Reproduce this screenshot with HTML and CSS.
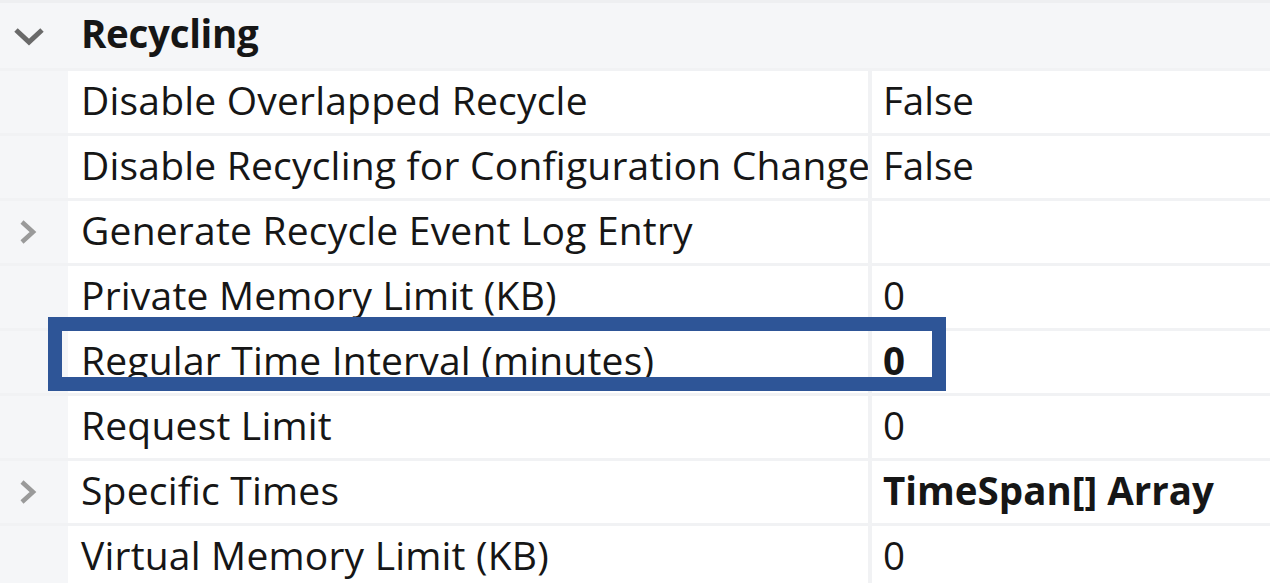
FILE: index.html
```html
<!DOCTYPE html>
<html lang="en">
<head>
  <meta charset="UTF-8">
  <title>Recycling Properties</title>
  <link rel="stylesheet" href="styles.css">
</head>
<body>

  <div class="grid">
    <div class="category">
      <div class="gutter">
        <svg class="chev-down" width="32" height="20" viewBox="0 0 32 20"><path d="M3 4 L16 16 L29 4" fill="none" stroke="#6a6a6a" stroke-width="5"/></svg>
      </div>
      <div class="cat-name">Recycling</div>
    </div>

    <div class="row">
      <div class="gutter"></div>
      <div class="name">Disable Overlapped Recycle</div>
      <div class="value">False</div>
    </div>
    <div class="row">
      <div class="gutter"></div>
      <div class="name">Disable Recycling for Configuration Changes</div>
      <div class="value">False</div>
    </div>
    <div class="row">
      <div class="gutter">
        <svg class="chev-right" width="20" height="26" viewBox="0 0 20 26"><path d="M4 3 L15 13 L4 23" fill="none" stroke="#9a9a9a" stroke-width="4.5"/></svg>
      </div>
      <div class="name">Generate Recycle Event Log Entry</div>
      <div class="value"></div>
    </div>
    <div class="row">
      <div class="gutter"></div>
      <div class="name">Private Memory Limit (KB)</div>
      <div class="value">0</div>
    </div>
    <div class="row">
      <div class="gutter"></div>
      <div class="name">Regular Time Interval (minutes)</div>
      <div class="value bold">0</div>
    </div>
    <div class="row">
      <div class="gutter"></div>
      <div class="name">Request Limit</div>
      <div class="value">0</div>
    </div>
    <div class="row">
      <div class="gutter">
        <svg class="chev-right" width="20" height="26" viewBox="0 0 20 26"><path d="M4 3 L15 13 L4 23" fill="none" stroke="#9a9a9a" stroke-width="4.5"/></svg>
      </div>
      <div class="name">Specific Times</div>
      <div class="value bold">TimeSpan[] Array</div>
    </div>
    <div class="row">
      <div class="gutter"></div>
      <div class="name">Virtual Memory Limit (KB)</div>
      <div class="value">0</div>
    </div>

    <!-- highlight annotation -->
    <div class="highlight"></div>
  </div>

</body>
</html>
```

FILE: styles.css
```css
body {
  margin: 0;
  background: #ffffff;
  font-family: "Open Sans", "Noto Sans", sans-serif;
  color: #161616;
  overflow: hidden;
}

.grid {
  position: relative;
  width: 1270px;
  height: 583px;
  overflow: hidden;
}

.category {
  display: flex;
  height: 68px;
  background: #f5f6f8;
  border-top: 3px solid #eeeff1;
  box-sizing: border-box;
}

.gutter {
  width: 68px;
  flex: none;
  background: #f5f6f8;
  display: flex;
  align-items: center;
  justify-content: center;
}

.category .gutter {
  justify-content: flex-start;
  padding-left: 13px;
  box-sizing: border-box;
}

.cat-name {
  font-weight: bold;
  font-size: 38.5px;
  padding-left: 13px;
  line-height: 60px;
  letter-spacing: -0.3px;
}

.row {
  display: flex;
  height: 65px;
  border-top: 3px solid #f1f2f4;
  box-sizing: border-box;
}

.row .gutter {
  justify-content: flex-start;
  padding-left: 18px;
  box-sizing: border-box;
}

.name {
  width: 804px;
  flex: none;
  font-size: 39px;
  padding-left: 13px;
  box-sizing: border-box;
  white-space: nowrap;
  overflow: hidden;
  line-height: 58px;
  letter-spacing: 0.2px;
  border-right: 4px solid #f1f2f4;
}

.value {
  flex: 1;
  font-size: 38.5px;
  padding-left: 11px;
  line-height: 58px;
  white-space: nowrap;
}

.bold {
  font-weight: bold;
}

.highlight {
  position: absolute;
  left: 48px;
  top: 317px;
  width: 898px;
  height: 74px;
  border: 14px solid #2e5597;
  box-sizing: border-box;
}
```
